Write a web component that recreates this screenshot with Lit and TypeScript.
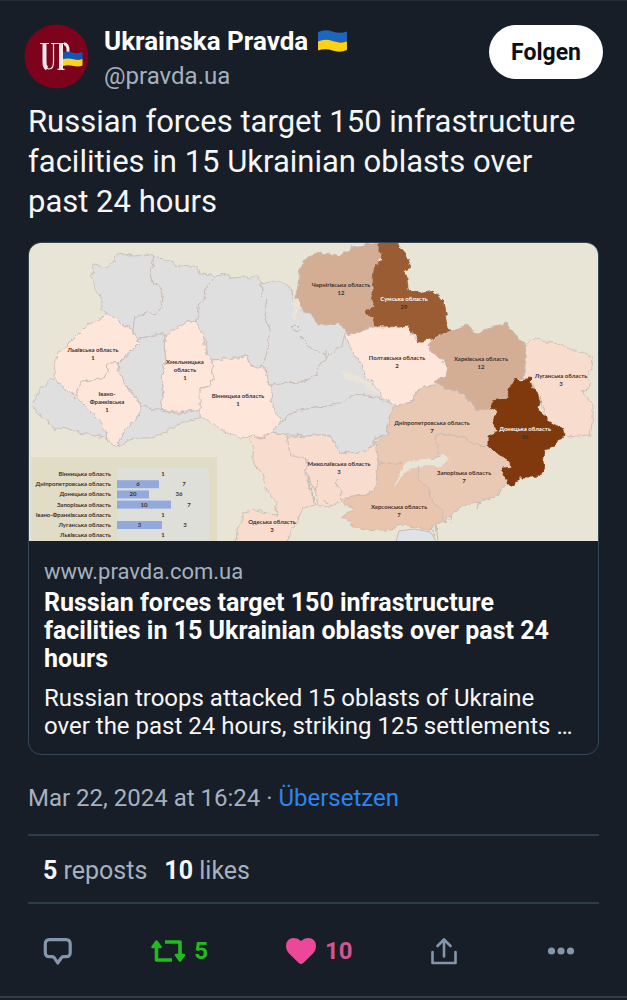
import { LitElement, html, svg, css } from "lit";
import { customElement } from "lit/decorators.js";

const GREY = "#dfdfdf";
const PALE = "#fee6da";
const BLUSH = "#f8dccd";
const SAND = "#e9c9b4";
const TAN = "#d3ae95";
const BROWN = "#9a5b30";
const DARK = "#80380f";

interface Region {
  fill: string;
  points: string;
}

const regions: Region[] = [
  { fill: GREY, points: "93,265 107,267 113,263 117,253 135,256 148,254 154,257 151,272 153,282 160,287 163,298 161,308 155,315 147,312 135,317 133,328 123,325 107,313 102,310 102,300 94,285 92,277" },
  { fill: GREY, points: "154,257 165,259 178,265 193,266 198,267 200,274 212,275 215,278 208,285 205,292 204,300 198,306 198,315 196,321 187,321 180,330 172,333 166,337 163,333 155,333 150,336 140,338 137,342 133,328 135,317 147,312 155,315 161,308 163,298 160,287 153,282 151,272" },
  { fill: GREY, points: "215,278 222,273 231,278 243,277 250,279 257,275 262,284 262,295 267,300 264,315 270,330 268,345 265,365 258,368 250,366 248,357 242,355 235,358 225,359 213,360 208,358 206,340 200,333 197,325 198,306 204,300 205,292 208,285" },
  { fill: GREY, points: "262,284 270,282 280,282 290,286 293,295 292,302 297,308 304,312 313,315 319,325 330,323 338,323 345,330 345,335 342,345 332,352 325,360 318,365 317,374 308,380 300,382 288,383 272,387 268,380 264,366 268,345 270,330 264,315 267,300 262,295" },
  { fill: GREY, points: "272,385 288,383 300,382 308,380 317,374 318,365 325,360 332,352 342,345 345,335 352,345 354,355 362,365 365,375 372,382 380,392 383,400 370,396 355,396 350,400 343,405 320,407 300,410 290,415 282,420 275,412 271,400" },
  { fill: GREY, points: "282,420 290,415 300,410 325,407 345,402 350,396 365,395 380,399 388,402 398,406 390,415 388,425 386,436 375,437 372,447 365,451 350,453 340,452 335,445 333,438 325,434 310,436 290,435 272,432 275,426" },
  { fill: PALE, points: "212,360 225,359 235,358 248,357 250,366 258,368 264,366 267,380 272,387 271,400 275,412 282,420 272,432 262,438 250,436 240,438 232,434 220,429 210,422 200,417 200,405 199,395 202,388 210,386 213,375" },
  { fill: PALE, points: "167,335 177,328 187,321 196,321 203,335 207,355 212,362 213,376 210,386 200,388 200,412 190,412 175,412 163,411 161,405 163,390 162,375 166,360 164,345" },
  { fill: PALE, points: "107,313 115,317 123,325 132,328 135,335 139,343 130,352 123,358 118,363 108,363 107,373 103,379 82,381 78,388 78,396 70,392 58,383 54,375 55,358 70,342 87,325 102,318" },
  { fill: PALE, points: "108,363 118,363 120,375 125,385 130,392 136,396 140,402 140,414 135,420 128,427 122,434 117,447 112,444 107,440 106,432 103,425 97,418 90,412 84,405 78,400 78,388 82,381 103,379 107,373" },
  { fill: GREY, points: "137,339 150,336 163,333 166,337 164,345 166,360 162,375 163,390 161,405 163,411 150,408 140,405 136,396 125,385 120,375 118,363 130,352 139,343" },
  { fill: GREY, points: "50,378 44,385 38,393 33,402 32,408 40,415 48,422 55,430 65,428 75,431 90,435 105,438 107,440 106,432 103,425 97,418 90,412 84,405 78,400 70,392 58,383" },
  { fill: GREY, points: "117,447 122,434 128,427 135,420 140,414 140,405 150,408 163,411 175,413 190,412 200,410 200,418 190,420 178,424 165,432 150,438 140,438 130,440" },
  { fill: TAN, points: "298,282 300,267 308,257 320,253 337,255 350,251 352,245 360,247 367,243 380,243 382,256 375,266 374,280 372,290 372,300 375,307 367,314 374,318 374,327 360,332 348,334 343,327 338,323 327,325 318,325 313,315 305,312 297,298" },
  { fill: PALE, points: "345,335 360,332 374,327 400,327 407,325 410,330 417,342 432,338 428,347 435,355 443,360 447,368 445,377 437,380 433,385 425,386 418,390 413,400 405,403 398,405 390,402 383,397 380,392 372,382 365,375 362,365 354,355" },
  { fill: BROWN, points: "379,240 397,240 400,248 406,255 412,267 403,271 407,278 408,290 423,293 433,291 443,300 445,315 447,325 451,331 440,335 432,338 423,342 417,342 416,335 410,330 407,325 400,327 390,326 374,326 374,318 367,314 367,310 375,307 371,300 374,290 373,280 375,264 384,259 379,252" },
  { fill: TAN, points: "432,340 445,333 451,331 460,327 468,325 474,332 480,333 485,330 495,326 507,323 512,330 517,337 526,345 526,360 524,370 524,378 515,379 510,390 508,398 495,402 490,408 478,410 470,403 465,395 450,390 440,385 433,382 445,377 447,368 443,360 435,355 428,347" },
  { fill: BLUSH, points: "527,342 533,338 550,342 567,347 580,352 593,357 592,368 587,378 592,385 582,392 593,405 593,418 590,435 567,437 555,428 545,415 540,400 535,390 530,380 524,378 526,360" },
  { fill: SAND, points: "413,400 418,390 425,386 440,385 450,390 465,395 470,403 478,410 490,408 497,410 493,422 497,432 488,435 488,446 475,445 465,437 450,435 435,434 437,445 440,455 430,460 420,465 407,467 400,463 390,464 378,462 374,450 376,440 386,435 388,425 390,415 393,407 405,403" },
  { fill: SAND, points: "435,434 450,435 465,437 475,445 488,446 495,452 510,460 512,467 502,472 508,482 500,490 495,497 480,501 465,505 452,514 445,522 437,520 430,505 425,485 418,478 418,467 430,462 440,455 437,445" },
  { fill: "#e9c5ad", points: "418,467 418,478 425,485 430,492 433,503 443,510 443,520 435,525 430,530 415,527 400,524 392,530 375,530 358,528 348,522 342,517 355,508 345,505 342,503 350,497 365,495 375,490 377,475 378,463 390,464 400,463" },
  { fill: BLUSH, points: "287,437 310,436 325,434 333,438 335,445 340,452 350,453 365,451 372,447 375,441 376,450 378,463 377,475 375,490 365,495 350,497 343,500 335,505 325,507 318,505 316,495 310,480 306,470 306,460 292,458 289,450" },
  { fill: BLUSH, points: "250,436 262,438 272,432 287,436 290,455 306,460 306,475 310,487 315,505 303,508 300,515 292,530 285,545 236,545 237,530 243,520 243,513 252,510 262,512 270,514 277,515 275,500 265,488 263,472 253,465 252,455 253,445" },
  { fill: DARK, points: "515,379 522,381 530,378 532,388 537,392 540,402 538,410 547,417 547,420 555,425 563,428 567,436 560,438 555,447 545,450 543,462 545,467 542,474 532,477 520,477 515,485 507,485 508,480 502,475 503,468 512,467 510,460 500,455 495,452 488,445 488,435 497,432 493,422 497,410 490,407 492,401 507,398 510,388" },
];

interface Label {
  x: number;
  y: number;
  lines: string[];
  light?: boolean;
}

const labels: Label[] = [
  { x: 93, y: 352, lines: ["Львівська область", "1"] },
  { x: 185, y: 364, lines: ["Хмельницька", "область", "1"] },
  { x: 107, y: 396, lines: ["Івано-", "Франківська", "1"] },
  { x: 238, y: 398, lines: ["Вінницька область", "1"] },
  { x: 341, y: 287, lines: ["Чернігівська область", "12"] },
  { x: 404, y: 301, lines: ["Сумська область", "29"], light: true },
  { x: 397, y: 360, lines: ["Полтавська область", "2"] },
  { x: 481, y: 361, lines: ["Харківська область", "12"] },
  { x: 561, y: 378, lines: ["Луганська область", "3"] },
  { x: 432, y: 425, lines: ["Дніпропетровська область", "7"] },
  { x: 525, y: 431, lines: ["Донецька область", "36"], light: true },
  { x: 464, y: 475, lines: ["Запорізька область", "7"] },
  { x: 399, y: 509, lines: ["Херсонська область", "7"] },
  { x: 339, y: 466, lines: ["Миколаївська область", "3"] },
  { x: 272, y: 524, lines: ["Одеська область", "3"] },
];

const legend = [
  { name: "Вінницька область", bar: 0, inner: "", total: "1", x: 163 },
  { name: "Дніпропетровська область", bar: 42, inner: "6", total: "7", x: 184 },
  { name: "Донецька область", bar: 32, inner: "20", total: "36", x: 179 },
  { name: "Запорізька область", bar: 54, inner: "10", total: "7", x: 189 },
  { name: "Івано-Франківська область", bar: 0, inner: "", total: "1", x: 163 },
  { name: "Луганська область", bar: 45, inner: "3", total: "3", x: 185 },
  { name: "Львівська область", bar: 0, inner: "", total: "1", x: 163 },
];

@customElement("region-map")
class RegionMap extends LitElement {
  static styles = css`
    :host { display: block; }
    .map { display: block; width: 100%; height: auto; }
    text { font-family: Lato, "Noto Sans", sans-serif; font-size: 6px; font-weight: 700; fill: #3f322c; }
    .mid { text-anchor: middle; }
    .end { text-anchor: end; }
    .light { fill: #fff; }
  `;

  render() {
    return html`
      <svg class="map" viewBox="29 243 569 298" role="img" aria-label="Map of Ukrainian oblasts">
        <defs>
          <filter id="rough" x="-2%" y="-2%" width="104%" height="104%">
            <feTurbulence type="fractalNoise" baseFrequency="0.16" numOctaves="2" seed="4" />
            <feDisplacementMap in="SourceGraphic" scale="6" xChannelSelector="R" yChannelSelector="G" />
          </filter>
        </defs>
        <rect x="29" y="243" width="569" height="298" fill="#e8e4d6" />
        <path d="M395 545L399 531L414 529L430 532L439 545Z" fill="#dfe3e8" stroke="#c4bdb6" />
        <g filter="url(#rough)" stroke-width="1" stroke-linejoin="round">
          ${regions.map((r) => svg`<polygon points=${r.points} fill=${r.fill} stroke=${r.fill === BROWN || r.fill === DARK ? r.fill : "#c5b8b2"} stroke-opacity="0.8" />`)}
          <g fill="none" stroke="#c5b8b2">
            <path d="M300 337L308 345L318 352L326 355M326 350V358M291 327L296 325L300 329L296 333Z" />
            <path d="M308 476L311 488L315 505M314 478L319 483L314 489M336 480L341 492L342 500M324 500L327 504" />
            <path d="M480 501L478 508M501 490L497 499M452 514L450 522M436 524L438 541M432 524L434 539" />
          </g>
          <path d="M293 300L298 303L296 322L293 318Z" fill="#e8e4d6" />
          <path d="M338 370L350 373L363 378L374 386L383 398L372 392L361 384L350 381Z" fill="#e8e4d6" />
          <path d="M405 463L417 460L433 460L443 454L449 459L441 467L430 465L413 468L405 471L398 482L393 490L399 475Z" fill="#e8e4d6" />
        </g>
        <rect x="31" y="457" width="186" height="84" fill="#e0dcc6" />
        <rect x="117" y="468" width="92" height="73" fill="#dfdfda" />
        ${legend.map((row, i) => {
          const y = 474 + i * 10.2;
          return svg`
            <rect x="117" y=${y - 4} width=${row.bar} height="8" fill="#91a9dc" />
            <text class="end" x="111" y=${y + 2}>${row.name}</text>
            <text class="mid" x=${117 + row.bar / 2} y=${y + 2}>${row.inner}</text>
            <text class="mid" x=${row.x} y=${y + 2}>${row.total}</text>`;
        })}
        ${labels.map((l) =>
          l.lines.map((line, i) => svg`<text class="mid ${l.light && i === 0 ? "light" : ""}" x=${l.x} y=${l.y + i * 8}>${line}</text>`)
        )}
      </svg>
    `;
  }
}

@customElement("app-root")
class AppRoot extends LitElement {
  static styles = css`
    :host {
      display: block;
      min-height: 100vh;
      background: #171e27;
      color: #f5f6f8;
      font-family: Roboto, "Liberation Sans", sans-serif;
      --line: #2d3c4b;
      --muted: #a6b1bf;
      --icon: #8496ab;
    }
    * { box-sizing: border-box; }
    p, h1, h2 { margin: 0; }
    a { color: inherit; text-decoration: none; }
    button { font: inherit; border: 0; background: none; padding: 0; color: var(--icon); cursor: pointer; }
    svg { display: block; }
    .post { border-top: 1px solid #252f39; border-bottom: 2px solid var(--line); }
    .head { display: flex; gap: 15px; padding: 23px 24px 0; }
    .who { flex: 1; min-width: 0; }
    .name { display: flex; align-items: center; gap: 9px; font-size: 26px; line-height: 34px; font-weight: 700; color: #fff; }
    .handle { font-size: 24px; line-height: 36px; color: var(--muted); }
    .follow { align-self: flex-start; height: 54px; margin-top: 1px; padding: 0 22px; border-radius: 27px; background: #fff; color: #0b0f14; font-size: 23px; font-weight: 700; }
    .body { padding: 8px 28px 0; }
    .text { font-size: 31px; line-height: 40px; }
    .card { display: block; margin-top: 20px; border: 1px solid #34485a; border-radius: 13px; overflow: hidden; }
    .info { padding: 16px 15px 14px; }
    .site { font-size: 22px; line-height: 30px; color: var(--muted); }
    .title { margin-top: 2px; font-size: 25px; line-height: 28px; font-weight: 700; color: #fff; }
    .desc { margin-top: 11px; font-size: 24px; line-height: 28px; display: -webkit-box; -webkit-line-clamp: 2; -webkit-box-orient: vertical; overflow: hidden; }
    .date { margin-top: 27px; font-size: 24px; line-height: 32px; color: var(--muted); }
    .link { color: #2c85f0; }
    .stats { display: flex; gap: 17px; margin-top: 20px; padding: 19px 15px 15px; border: solid var(--line); border-width: 2px 0; font-size: 25px; line-height: 32px; color: var(--muted); }
    .stats strong { color: #f5f6f8; }
    .actions { display: flex; justify-content: space-between; align-items: center; padding: 29px 24px 27px 15px; }
    .action { display: flex; align-items: center; gap: 8px; height: 36px; font-size: 24px; font-weight: 700; }
    .more { padding-left: 12px; }
    .green { color: #21bc1c; }
    .pink { color: #ec4899; }
    .count { color: #d3558f; }
  `;

  render() {
    return html`
      <article class="post">
        <header class="head">
          <svg width="65" height="65" viewBox="0 0 65 65" role="img" aria-label="Ukrainska Pravda">
            <circle cx="32.5" cy="32.5" r="32" fill="#7d031c" />
            <g fill="none" stroke="#f4e8e8">
              <path d="M20.5 19.5V38Q20.5 45 25 45Q29.5 45 29.5 38V19.5" stroke-width="1.2" />
              <path d="M20.5 19.5V38Q20.5 43 23 44.5" stroke-width="4" />
              <path d="M37 19.5V45" stroke-width="4" />
              <path d="M16 19.5H25M27 19.5H41M33.5 45.3H40.5" stroke-width="1.2" />
              <path d="M40 19.7Q44.5 20 44 28" stroke-width="3" />
            </g>
            <path d="M39 28Q44 27 48.5 28.5Q54 30 58.5 28V35H39Z" fill="#1058b5" />
            <path d="M39 35Q44 34 48.5 35Q54 36.5 58.5 35V41.5Q54 43.5 48.5 41.8Q44 40.5 39 42Z" fill="#ffd420" />
          </svg>
          <div class="who">
            <h1 class="name">
              <span>Ukrainska Pravda</span>
              <svg width="31" height="22" viewBox="0 0 30 22" preserveAspectRatio="none" role="img" aria-label="Ukraine">
                <path d="M1 2Q8-1 15 1.5Q22 4 29 1.5V12H1Z" fill="#1c66bd" />
                <path d="M1 11.5Q8 8.5 15 11Q22 13.5 29 11.5V20Q22 23 15 20.5Q8 18 1 20.5Z" fill="#fcd116" />
              </svg>
            </h1>
            <p class="handle">@pravda.ua</p>
          </div>
          <button class="follow">Folgen</button>
        </header>
        <div class="body">
          <p class="text">Russian forces target 150 infrastructure facilities in 15 Ukrainian oblasts over past 24 hours</p>
          <a class="card" href="#">
            <region-map></region-map>
            <div class="info">
              <p class="site">www.pravda.com.ua</p>
              <h2 class="title">Russian forces target 150 infrastructure facilities in 15 Ukrainian oblasts over past 24 hours</h2>
              <p class="desc">Russian troops attacked 15 oblasts of Ukraine over the past 24 hours, striking 125 settlements …</p>
            </div>
          </a>
          <p class="date">Mar 22, 2024 at 16:24 · <a class="link" href="#">Übersetzen</a></p>
          <div class="stats">
            <span><strong>5</strong> reposts</span>
            <span><strong>10</strong> likes</span>
          </div>
          <div class="actions">
            <button class="action" aria-label="Reply">
              <svg width="30" height="30" viewBox="0 0 30 30" fill="none" stroke="currentColor" stroke-width="3.2" stroke-linejoin="round">
                <path d="M6.5 3.6H23Q27.2 3.6 27.2 8V16.5Q27.2 20.7 23 20.7H20.5Q19 20.7 18.2 22L14.7 27L11.5 22Q10.5 20.7 9 20.7H6.5Q2.3 20.7 2.3 16.5V8Q2.3 3.6 6.5 3.6Z" />
              </svg>
            </button>
            <button class="action green" aria-label="Repost">
              <svg width="36" height="26" viewBox="0 0 36 26" fill="none" stroke="currentColor" stroke-width="3.6" stroke-linejoin="round">
                <path d="M6.5 7V22H22M15 4H30V18" />
                <path d="M6.5 3.5L2.5 9H10.5ZM30 22.5L26 17H34Z" fill="currentColor" stroke-width="2.6" />
              </svg>
              <span>5</span>
            </button>
            <button class="action pink" aria-label="Like">
              <svg width="32" height="28" viewBox="0 0 32 28">
                <path d="M16 27Q14.8 27 13.5 25.7L3.8 16.2Q1 13.3 1 9.5Q1 1 9 1Q13 1 16 4Q19 1 23 1Q31 1 31 9.5Q31 13.3 28.2 16.2L18.5 25.7Q17.2 27 16 27Z" fill="currentColor" />
              </svg>
              <span class="count">10</span>
            </button>
            <button class="action" aria-label="Share">
              <svg width="28" height="28" viewBox="0 0 28 28" fill="none" stroke="currentColor" stroke-width="2.6" stroke-linecap="round" stroke-linejoin="round">
                <path d="M2.5 15V26H25.5V15M14 19.5V3M7.5 9L14 2.5L20.5 9" />
              </svg>
            </button>
            <button class="action more" aria-label="More">
              <svg width="28" height="10" viewBox="0 0 28 10" fill="currentColor">
                <circle cx="4.5" cy="5" r="3.6" /><circle cx="14" cy="5" r="3.6" /><circle cx="23.5" cy="5" r="3.6" />
              </svg>
            </button>
          </div>
        </div>
      </article>
    `;
  }
}
